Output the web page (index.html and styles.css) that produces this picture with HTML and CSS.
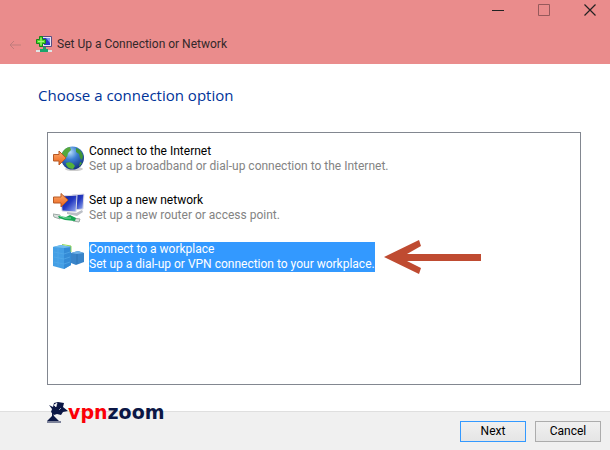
FILE: index.html
```html
<!doctype html>
<html lang="en">
<head>
<meta charset="UTF-8">
<meta name="viewport" content="width=device-width, initial-scale=1">
<title>Set Up a Connection or Network</title>
<link rel="stylesheet" href="styles.css">
</head>
<body>
<header class="titlebar">
<div class="window-controls">
<button aria-label="Minimize"><svg width="12" height="12"><path d="M0 6.500h12" stroke="#222"/></svg></button>
<button aria-label="Maximize" disabled><svg width="12" height="12"><path d="M.5 .5h11v11h-11z" fill="none" stroke="#96595b"/></svg></button>
<button aria-label="Close"><svg width="12" height="12"><path d="M.5 .5l11 11M11.5 .5l-11 11" stroke="#222" stroke-width="1.2"/></svg></button>
</div>
<div class="title-row">
<button class="back" aria-label="Back" disabled><svg width="12" height="10"><path d="M12 5H1M5 1L1 5l4 4" fill="none" stroke="#c07c7c"/></svg></button>
<svg class="app-icon" width="16" height="17" viewBox="0 0 16 17">
<path d="M5.500 .5h10v10h-10z" fill="#e9e6f5" stroke="#5a4d80"/>
<path d="M7 2h7v7H8z" fill="#2a39c8"/>
<path d="M10 2h4v5z" fill="#7d93ee"/>
<path d="M0 14h16v2H0z" fill="#dfe6e6"/>
<path d="M7 11h3v2h2v3H4v-3h3z" fill="#1aa56b"/>
<path d="M3.500 .5h3v3h3v4h-3v3h-3v-3h-3v-4h3z" fill="#4ddc27" stroke="#14851a"/>
<path d="M5 2v7M2 5.500h6" stroke="#a6f57a"/>
</svg>
<h1>Set Up a Connection or Network</h1>
</div>
</header>

<main>
<h2>Choose a connection option</h2>
<div class="options" role="listbox" aria-label="Connection options">
<button class="option" role="option" aria-selected="false">
<svg width="32" height="30" viewBox="0 0 32 30">
<defs>
<radialGradient id="sea" cx=".4" cy=".25" r=".8"><stop offset="0" stop-color="#b5dcf8"/><stop offset=".4" stop-color="#3c7fd4"/><stop offset="1" stop-color="#102c78"/></radialGradient>
<linearGradient id="orange" x2="0" y2="1"><stop offset="0" stop-color="#ffad70"/><stop offset="1" stop-color="#e85f16"/></linearGradient>
</defs>
<ellipse cx="21" cy="25" rx="9" ry="2" fill="#ccc"/>
<circle cx="19.500" cy="14" r="11.500" fill="url(#sea)"/>
<path d="M9 9c2-4 5-6 8-6l1 3-3 3-1 4-3 1-2-2z" fill="#55a83c"/>
<path d="M23 4c4 1 6 4 7 8l-1 4-2-2-1-4-3-2z" fill="#3f9637"/>
<path d="M13 19c4-2 7 0 9 3l-2 3c-4 0-7-3-7-6z" fill="#54b13a"/>
<path d="M27 18l2 1-3 4z" fill="#49a033"/>
<path d="M.5 10.500H6V7l7 7-7 7v-4H.5z" fill="url(#orange)" stroke="#b75a26"/>
</svg>
<span class="label"><span class="name">Connect to the Internet</span><span class="hint">Set up a broadband or dial-up connection to the Internet.</span></span>
</button>
<button class="option" role="option" aria-selected="false">
<svg width="32" height="30" viewBox="0 0 32 30">
<defs>
<linearGradient id="screen" x2="1" y2="1"><stop offset="0" stop-color="#0c1c94"/><stop offset=".5" stop-color="#2439c0"/><stop offset="1" stop-color="#a3b9f4"/></linearGradient>
</defs>
<path d="M19 2l12-1-1 15-10 1z" fill="url(#screen)" stroke="#dcdce6"/>
<path d="M8 3l16-1-1 17-14-1z" fill="url(#screen)" stroke="#dcdce6"/>
<path d="M14 19l9 1 6-3 1 2-6 4-10-2z" fill="#bbbfc6"/>
<path d="M0 21l7 1v4l-6-2z" fill="#d9dfdd" stroke="#9eaaa6"/>
<path d="M20 25l7 1-1 3-6-1z" fill="#d9dfdd" stroke="#9eaaa6"/>
<path d="M5 23l8 1 4-2 6 3-1 3-10-1-6-2z" fill="#16a653"/>
<path d="M7 23l5 2 6 0" fill="none" stroke="#85dba5"/>
<path d="M.5 4H8V.5L15 7l-7 7v-4H.5z" fill="url(#orange)" stroke="#b75a26"/>
</svg>
<span class="label"><span class="name">Set up a new network</span><span class="hint">Set up a new router or access point.</span></span>
</button>
<button class="option selected" role="option" aria-selected="true">
<svg width="32" height="30" viewBox="0 0 32 30">
<path d="M18 11l7-2 6 2v9l-8 3-5-2z" fill="#3984c9"/>
<path d="M18 11l6 1 7-1-6-2z" fill="#6db0e6"/>
<path d="M24 12v10" stroke="#2f74b5"/>
<path d="M0 5l8-2 10 2v18l-7 4-11-3z" fill="#449fe5"/>
<path d="M11 6l7-2v19l-7 4z" fill="#348bd6"/>
<path d="M0 5l8-2 10 2-7 1z" fill="#70bdee"/>
<path d="M9 2.500l9 1.500v6" fill="none" stroke="#8fd957"/>
<path d="M1 10l10 2 6-2M1 15l10 2 6-2M1 20l10 2 6-2M5 5v19" fill="none" stroke="#55aaea" stroke-width=".7"/>
</svg>
<span class="label"><span class="name">Connect to a workplace</span><span class="hint">Set up a dial-up or VPN connection to your workplace.</span></span>
<svg class="pointer" width="97" height="36" viewBox="0 0 97 36"><path d="M0 18L35 1l2 6-14 8h74v7H23l14 7-2 6z" fill="#bf4b31"/></svg>
</button>
</div>
</main>

<footer>
<div class="logo">
<svg width="21" height="21" viewBox="0 0 21 21">
<path d="M2 3l4 2 1-4 4-1 6 1-1 4 5 4-5 1-2 3-4-1-3 1-3-3 1-3z" fill="#0b1745"/>
<path d="M7 3l3-2-1 4zM12 8l2-2" fill="#fff" stroke="#fff" stroke-width=".6"/>
<path d="M5 9l2 5 5 5H0l5-5z" fill="#0b1745"/>
<path d="M0 20h14" stroke="#0b1745"/>
</svg>
<span><span class="vpn">vpn</span>zoom</span>
</div>
<button class="push primary">Next</button>
<button class="push">Cancel</button>
</footer>
</body>
</html>
```

FILE: styles.css
```css
*
{
box-sizing: border-box;
}

body
{
margin: 0;
min-height: 100vh;
display: flex;
flex-direction: column;
background-color: #fff;
color: #000;
font-family: Roboto, "Open Sans", sans-serif;
font-size: 12px;
line-height: 15px;
}

button
{
font: inherit;
color: inherit;
}

svg
{
display: block;
flex: none;
}

h1, h2
{
margin: 0;
font-weight: normal;
}

.titlebar
{
height: 64px;
background-color: #ea8c8c;
}

.window-controls
{
display: flex;
justify-content: flex-end;
gap: 34px;
padding: 4px 14px 0 0;
}

.window-controls button, .back
{
padding: 0;
border: 0;
background: none;
}

.title-row
{
display: flex;
align-items: center;
margin-top: 20px;
padding-left: 9px;
}

.app-icon
{
margin: 0 5px 0 15px;
}

h1
{
font-size: 12px;
color: #33282a;
}

main
{
flex: 1;
display: flex;
flex-direction: column;
padding: 20px 29px 26px 38px;
}

h2
{
font-family: "Open Sans", sans-serif;
font-size: 15px;
line-height: 22px;
color: #003399;
}

.options
{
flex: 1;
display: flex;
flex-direction: column;
gap: 19px;
margin: 26px 0 0 9px;
padding: 11px 5px;
border: 1px solid #828790;
}

.option
{
display: flex;
align-items: center;
gap: 4px;
height: 30px;
padding: 0;
border: 0;
background: none;
text-align: left;
white-space: nowrap;
}

.name, .hint
{
display: block;
}

.hint
{
color: #838383;
}

.selected .label
{
background-color: #3399ff;
color: #fff;
}

.selected .hint
{
color: inherit;
}

.pointer
{
margin-left: 5px;
}

footer
{
position: relative;
display: flex;
justify-content: flex-end;
gap: 9px;
padding: 9px 9px 8px;
border-top: 1px solid #dfdfdf;
background-color: #f0f0f0;
}

.push
{
width: 66px;
height: 21px;
padding: 0;
border: 1px solid #acacac;
background: linear-gradient(#f0f0f0, #e5e5e5);
}

.primary
{
border-color: #3399ff;
}

/* sits across the top edge of the footer */
.logo
{
position: absolute;
left: 47px;
top: -10px;
display: flex;
align-items: center;
color: #0b1745;
font-family: "DejaVu Sans", sans-serif;
font-size: 19px;
font-weight: bold;
line-height: 21px;
}

.vpn
{
color: #fb0007;
}
```
